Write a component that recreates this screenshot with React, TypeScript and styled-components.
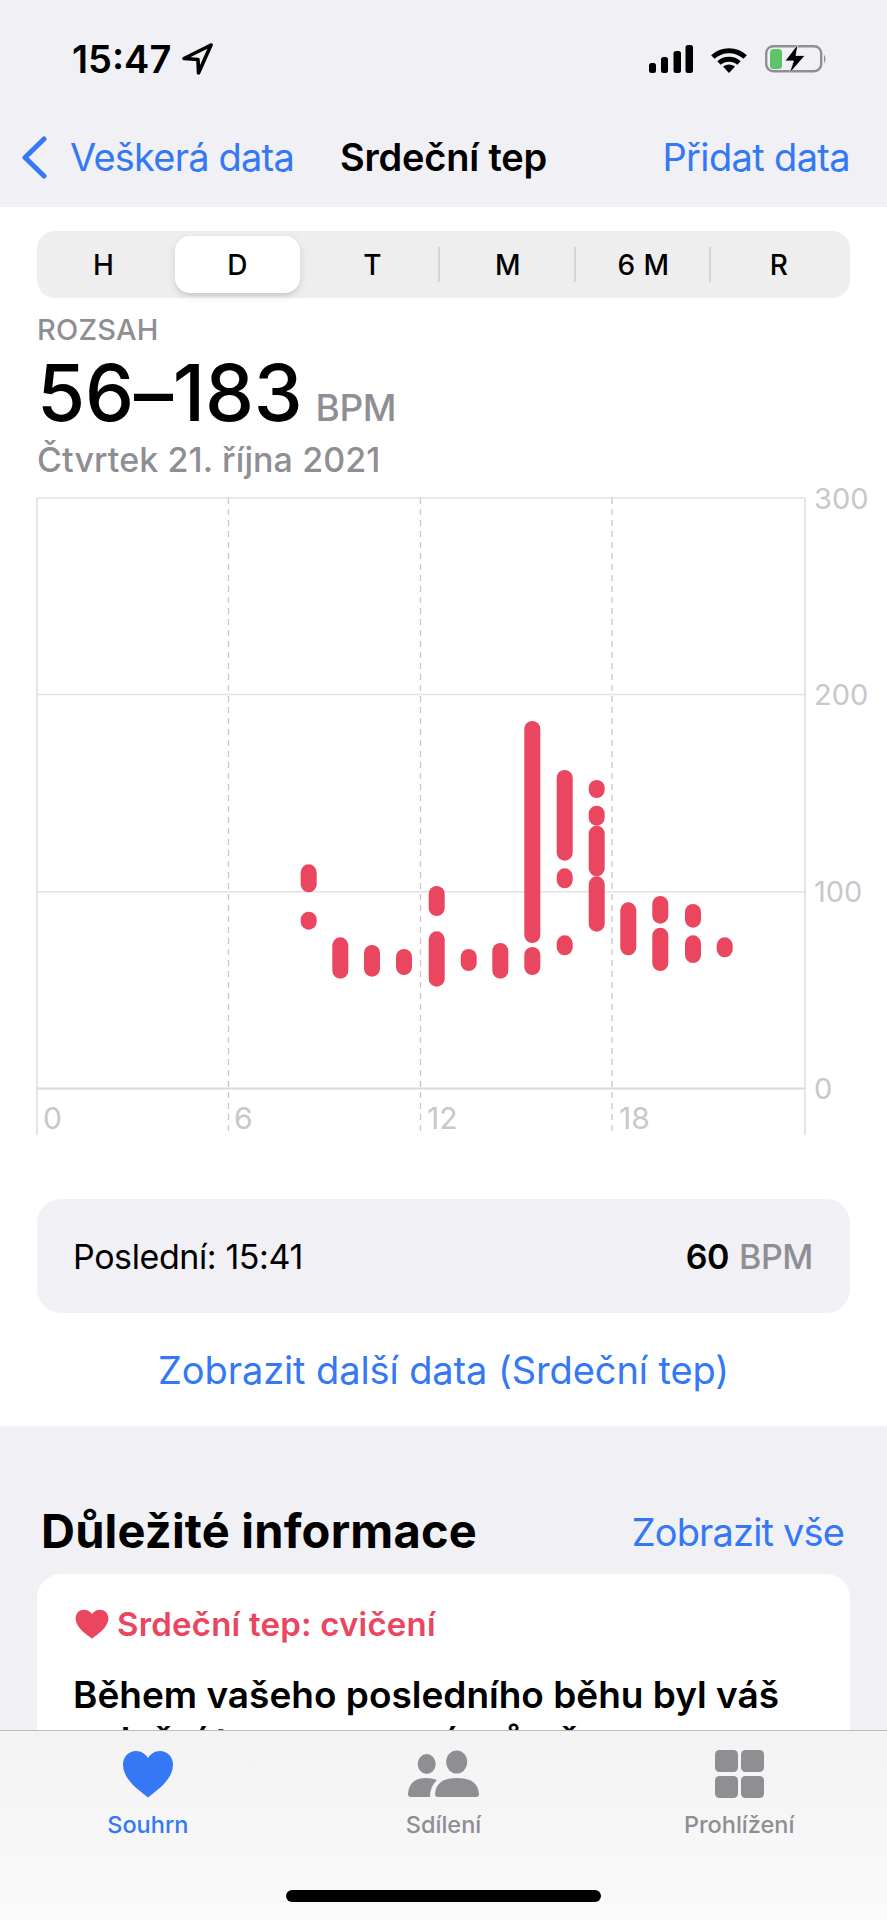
import React from "react";
import styled, { createGlobalStyle } from "styled-components";

const BLUE = "#3478f6";
const RED = "#ea4660";
const GRAY = "#8e8e93";
const FONT = `Inter, "Liberation Sans", sans-serif`;

const Global = createGlobalStyle`
  html, body { margin: 0; padding: 0; background: #fff; }
  * { box-sizing: border-box; }
`;

const Screen = styled.div`
  width: 887px; height: 1920px; display: flex; flex-direction: column; overflow: hidden;
  font-family: ${FONT}; color: #000; background: #fff;
`;
const Header = styled.header`
  height: 207px; flex: none; background: #f0f0f5; display: flex; flex-direction: column;
`;
const StatusBar = styled.div`
  height: 118px; display: flex; align-items: center; justify-content: space-between; padding: 0 60px 0 72px;
`;
const Time = styled.div`
  display: flex; align-items: center; gap: 11px;
  font-size: 38px; font-weight: 600; letter-spacing: 0; line-height: 44px;
`;
const StatusIcons = styled.div`
  display: flex; align-items: center; gap: 17px;
`;
const Nav = styled.nav`
  height: 78px; display: grid; grid-template-columns: 1fr auto 1fr; align-items: center; padding: 0 37px;
  font-size: 38px; line-height: 44px;
`;
const Back = styled.div`
  display: flex; align-items: center; gap: 23px; margin-left: -16px; color: ${BLUE}; letter-spacing: -0.8px;
`;
const NavTitle = styled.div`font-weight: 600; letter-spacing: -0.2px;`;
const NavAction = styled.div`justify-self: end; color: ${BLUE}; letter-spacing: -0.65px;`;

const Main = styled.main`flex: 1; min-height: 0; overflow: hidden;`;
const Summary = styled.section`padding: 24px 37px 26px;`;
const Segments = styled.div`
  display: grid; grid-template-columns: 133px 135px 135px 136px 135px 136px; height: 67px;
  background: #eeeeef; border-radius: 18px;
`;
const Segment = styled.div<{ $active?: boolean; $divider?: boolean }>`
  position: relative; display: flex; align-items: center; justify-content: center;
  font-size: 28px; font-weight: 500; letter-spacing: 0.4px;
  ${(p) => p.$active && `margin: 5px; background: #fff; border-radius: 15px; box-shadow: 0 3px 8px rgba(0,0,0,.12), 0 3px 1px rgba(0,0,0,.04);`}
  ${(p) => p.$divider && `&::after { content: ""; position: absolute; right: 0; top: 16px; bottom: 16px; width: 2px; background: #d4d4d6; }`}
`;
const Label = styled.div`
  margin-top: 15px; color: ${GRAY}; font-size: 29px; font-weight: 500; line-height: 34px; letter-spacing: 0.2px;
`;
const RangeRow = styled.div`
  margin-top: 3px; display: flex; align-items: baseline; gap: 13px; height: 86px; line-height: 86px;
`;
const RangeValue = styled.span`font-size: 78px; font-weight: 500; letter-spacing: -0.2px;`;
const Unit = styled.span`font-size: 37px; font-weight: 500; color: ${GRAY}; letter-spacing: -0.4px;`;
const DateLine = styled.div`
  margin-top: 4px; color: ${GRAY}; font-size: 34px; font-weight: 500; line-height: 40px; letter-spacing: 0.1px;
`;
const ChartSvg = styled.svg`
  display: block; margin: 0 -37px; width: 887px; height: 660px;
  font-family: ${FONT};
`;
const LatestCard = styled.div`
  margin: 59px 0 0; height: 114px; width: 813px; padding: 0 37px 0 36px; border-radius: 24px; background: #f0f0f5;
  display: flex; align-items: center; justify-content: space-between; font-size: 34px; letter-spacing: -0.4px;
`;
const LatestValue = styled.div`display: flex; gap: 10px; font-weight: 600;`;
const LatestUnit = styled.span`color: ${GRAY}; font-weight: 500;`;
const MoreLink = styled.div`
  margin-top: 27px; height: 60px; line-height: 60px; text-align: center; color: ${BLUE};
  font-size: 38px; letter-spacing: -0.1px;
`;
const Highlights = styled.section`
  background: #f0f0f5; padding: 76px 37px 40px;
`;
const HighlightsHead = styled.div`
  display: flex; align-items: center; justify-content: space-between; height: 56px; margin-bottom: 16px; padding: 0 6px 0 4px;
`;
const HighlightsTitle = styled.h2`
  margin: 0; font-size: 47px; font-weight: 700; letter-spacing: 0.2px;
`;
const SeeAll = styled.div`color: ${BLUE}; font-size: 38px; letter-spacing: -0.85px; padding-top: 4px;`;
const InfoCard = styled.article`
  width: 813px; background: #fff; border-radius: 24px; padding: 30px 36px 30px;
`;
const Eyebrow = styled.div`
  display: flex; align-items: center; gap: 8px; height: 40px; padding-left: 2px; color: ${RED};
  font-size: 33px; font-weight: 600; letter-spacing: 0.2px;
`;
const InfoBody = styled.p`
  margin: 28px 0 0; font-size: 37px; font-weight: 600; line-height: 46px; letter-spacing: 0;
`;
const TabBar = styled.footer`
  height: 190px; flex: none; border-top: 1px solid #bdbdc0; background: linear-gradient(#f3f3f3, #fafafa);
  display: flex; flex-direction: column; padding-top: 19px;
`;
const Tabs = styled.div`display: grid; grid-template-columns: repeat(3, 1fr);`;
const Tab = styled.div<{ $active?: boolean }>`
  display: flex; flex-direction: column; align-items: center; gap: 12px;
  color: ${(p) => (p.$active ? BLUE : GRAY)};
  font-size: 23.5px; font-weight: 500; line-height: 30px;
`;
const TabIcon = styled.svg`display: block; height: 48px;`;
const HomeIndicator = styled.div`
  margin: auto auto 18px; width: 315px; height: 12px; border-radius: 6px; background: #000;
`;

const HEART = "M26 47.5C20 42 1 31 1 14.5C1 6.5 7 1 14 1C19 1 23.5 3.8 26 8C28.5 3.8 33 1 38 1C45 1 51 6.5 51 14.5C51 31 32 42 26 47.5Z";

const bars: [number, number, number][] = [
  [308.7, 864.3, 892.3], [308.7, 911.7, 929.7],
  [340.3, 937.3, 978.7],
  [372, 945, 976.7],
  [404, 949, 975],
  [436.7, 886, 916], [436.7, 931.3, 986.7],
  [468.7, 949, 971],
  [500.3, 943, 978.7],
  [532.3, 721, 943], [532.3, 947, 975],
  [564.7, 770, 860.7], [564.7, 868.3, 888.3], [564.7, 935.3, 955.3],
  [596.7, 780, 798], [596.7, 805.7, 825.7], [596.7, 825.7, 876.3], [596.7, 876.3, 931.7],
  [628.3, 902.3, 955.3],
  [660.3, 896, 923.7], [660.3, 927.7, 971],
  [693, 904, 927.7], [693, 935.3, 963],
  [724.7, 937.3, 957.3],
];

const Chart = () => (
  <ChartSvg viewBox="0 480 887 660">
    {[498, 694.5, 891.7].map((y) => (
      <line key={y} x1={37} x2={805} y1={y} y2={y} stroke="#e2e2e4" strokeWidth={1.5} />
    ))}
    <line x1={37} x2={805} y1={1088.5} y2={1088.5} stroke="#d8d8da" strokeWidth={2} />
    {[37, 805].map((x) => (
      <line key={x} x1={x} x2={x} y1={498} y2={1135} stroke="#dcdcde" strokeWidth={1.5} />
    ))}
    {[228.5, 420.5, 612].map((x) => (
      <line key={x} x1={x} x2={x} y1={498} y2={1132} stroke="#c6c6ca" strokeWidth={1.3} strokeDasharray="6 5" />
    ))}
    {bars.map(([x, t, b]) => (
      <rect key={`${x}-${t}`} x={x - 8} y={t} width={16} height={b - t} rx={8} fill={RED} />
    ))}
    {[["300", 498], ["200", 694.5], ["100", 891.7], ["0", 1088.5]].map(([t, y]) => (
      <text key={t} x={814} y={Number(y) + 10.5} fontSize={29} fill="#c7c7cc">{t}</text>
    ))}
    {[["0", 43], ["6", 234], ["12", 427], ["18", 619]].map(([t, x]) => (
      <text key={t} x={x} y={1129} fontSize={30} fill="#c7c7cc">{t}</text>
    ))}
  </ChartSvg>
);

export default function App() {
  return (
    <Screen>
      <Global />
      <Header>
        <StatusBar>
          <Time>
            15:47
            <svg width="32" height="32" viewBox="0 0 32 32">
              <path d="M29 2L2 15.5L16 16.5L16.5 30Z" fill="none" stroke="#000" strokeWidth="3.6" strokeLinejoin="round" />
            </svg>
          </Time>
          <StatusIcons>
            <svg width="44" height="28" viewBox="0 0 44 28">
              <rect x="0" y="18" width="7" height="10" rx="2.5" />
              <rect x="12" y="12" width="7" height="16" rx="2.5" />
              <rect x="24.5" y="6" width="7.5" height="22" rx="2.5" />
              <rect x="36.5" y="0" width="7.5" height="28" rx="2.5" />
            </svg>
            <svg width="38" height="27" viewBox="0 0 38 27">
              <path d="M2.8 11A24 24 0 0 1 35.2 11" fill="none" stroke="#000" strokeWidth="5" strokeLinecap="butt" />
              <path d="M9 17A15 15 0 0 1 29 17" fill="none" stroke="#000" strokeWidth="5" />
              <path d="M19 27L13 20.5Q19 16.5 25 20.5Z" />
            </svg>
            <svg width="62" height="30" viewBox="0 0 62 30">
              <rect x="1.2" y="2.2" width="55" height="25" rx="7" fill="none" stroke={GRAY} strokeWidth="2.4" />
              <rect x="5" y="5" width="12" height="20" rx="3.5" fill="#5cc569" />
              <path d="M59 10.5Q62 15 59 19.5Z" fill={GRAY} />
              <path d="M33 0L20 17H28.5L24 30L40 11.5H31Z" stroke="#f0f0f5" strokeWidth="0.8" />
            </svg>
          </StatusIcons>
        </StatusBar>
        <Nav>
          <Back>
            <svg width="26" height="43" viewBox="0 0 26 43">
              <path d="M23 3L4 21.5L23 40" fill="none" stroke={BLUE} strokeWidth="5" strokeLinecap="round" strokeLinejoin="round" />
            </svg>
            Veškerá data
          </Back>
          <NavTitle>Srdeční tep</NavTitle>
          <NavAction>Přidat data</NavAction>
        </Nav>
      </Header>
      <Main>
        <Summary>
          <Segments>
            <Segment>H</Segment>
            <Segment $active>D</Segment>
            <Segment $divider>T</Segment>
            <Segment $divider>M</Segment>
            <Segment $divider>6 M</Segment>
            <Segment>R</Segment>
          </Segments>
          <Label>ROZSAH</Label>
          <RangeRow>
            <RangeValue>56–183</RangeValue>
            <Unit>BPM</Unit>
          </RangeRow>
          <DateLine>Čtvrtek 21. října 2021</DateLine>
          <Chart />
          <LatestCard>
            <span>Poslední: 15:41</span>
            <LatestValue>60 <LatestUnit>BPM</LatestUnit></LatestValue>
          </LatestCard>
          <MoreLink>Zobrazit další data (Srdeční tep)</MoreLink>
        </Summary>
        <Highlights>
          <HighlightsHead>
            <HighlightsTitle>Důležité informace</HighlightsTitle>
            <SeeAll>Zobrazit vše</SeeAll>
          </HighlightsHead>
          <InfoCard>
            <Eyebrow>
              <svg width="34" height="30" viewBox="0 0 52 48" preserveAspectRatio="none">
                <path d={HEART} fill={RED} />
              </svg>
              Srdeční tep: cvičení
            </Eyebrow>
            <InfoBody>Během vašeho posledního běhu byl váš srdeční tep v rozmezí průměru</InfoBody>
          </InfoCard>
        </Highlights>
      </Main>
      <TabBar>
        <Tabs>
          <Tab $active>
            <TabIcon width="52" viewBox="0 0 52 48"><path d={HEART} fill={BLUE} /></TabIcon>
            Souhrn
          </Tab>
          <Tab>
            <TabIcon width="74" viewBox="0 0 74 48" fill={GRAY}>
              <ellipse cx="20.7" cy="14" rx="9" ry="10" />
              <ellipse cx="50.7" cy="12" rx="10.5" ry="11.5" />
              <path d="M2 44Q3 28 20 28Q26 28 31 30Q24 36 24 47H5Q2 47 2 44Z" />
              <path d="M29 44Q30 28 51 28Q72 28 73 44Q73 47 70 47H32Q29 47 29 44Z" />
            </TabIcon>
            Sdílení
          </Tab>
          <Tab>
            <TabIcon width="49" viewBox="0 0 49 48" fill={GRAY}>
              <rect x="0" y="0" width="23" height="22" rx="4.5" />
              <rect x="26" y="0" width="23" height="22" rx="4.5" />
              <rect x="0" y="26" width="23" height="22" rx="4.5" />
              <rect x="26" y="26" width="23" height="22" rx="4.5" />
            </TabIcon>
            Prohlížení
          </Tab>
        </Tabs>
        <HomeIndicator />
      </TabBar>
    </Screen>
  );
}
